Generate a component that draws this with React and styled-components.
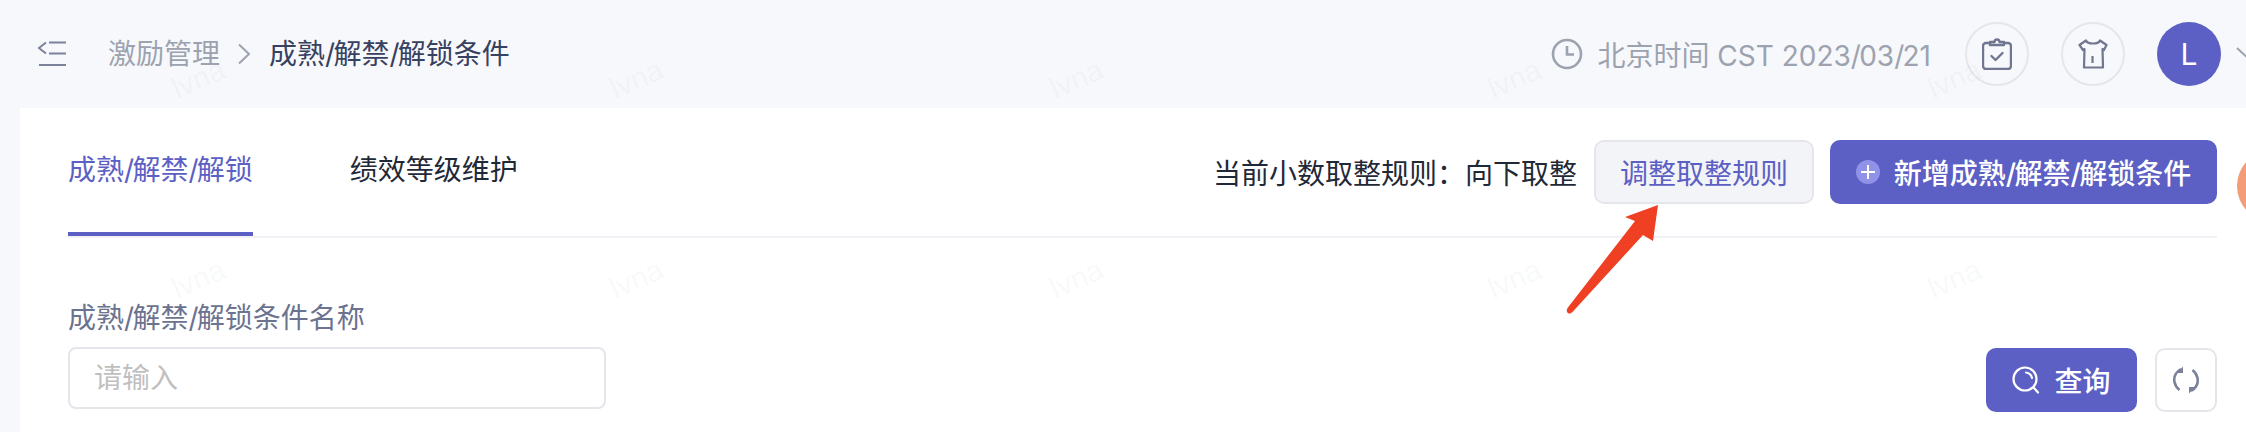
import React from 'react';
import styled, { createGlobalStyle } from 'styled-components';

const PURPLE = '#5c60c4';
const BORDER = '#e5e6ec';
const FONT = 'Inter, "Noto Sans CJK SC", sans-serif';

const GlobalStyle = createGlobalStyle`
  html, body {
    margin: 0;
    padding: 0;
    background: #f7f8fc;
  }
  * {
    box-sizing: border-box;
  }
`;

const Page = styled.div`
  position: relative;
  width: 2246px;
  height: 432px;
  overflow: hidden;
  background: #f7f8fc;
  font-family: ${FONT};
  font-size: 28px;
`;

const Header = styled.header`
  display: flex;
  align-items: center;
  height: 108px;
  padding-left: 37px;
  width: 2279px;
`;

const Breadcrumb = styled.nav`
  display: flex;
  align-items: center;
  margin-left: 41px;
  line-height: 36px;
`;

const Crumb = styled.span`
  color: ${({ $current }) => ($current ? '#374160' : '#9ca3af')};
`;

const HeaderRight = styled.div`
  display: flex;
  align-items: center;
  margin-left: auto;
`;

const TimeBox = styled.div`
  display: flex;
  align-items: center;
  gap: 14px;
  margin-right: 34px;
  color: #9ca3af;
`;

const RoundButton = styled.button`
  display: flex;
  align-items: center;
  justify-content: center;
  width: 64px;
  height: 64px;
  padding: 0;
  margin-right: 32px;
  border: 2px solid ${BORDER};
  border-radius: 50%;
  background: transparent;
`;

const Avatar = styled.div`
  display: flex;
  align-items: center;
  justify-content: center;
  width: 64px;
  height: 64px;
  border-radius: 50%;
  background: ${PURPLE};
  color: #fff;
  font-size: 30px;
`;

const Caret = styled.svg`
  margin-left: 14px;
  margin-right: 14px;
`;

const Card = styled.main`
  height: 324px;
  margin-left: 20px;
  padding: 0 29px 0 48px;
  background: #fff;
`;

const TabBar = styled.div`
  display: flex;
  justify-content: space-between;
  height: 130px;
  border-bottom: 2px solid #f0f0f6;
`;

const Tabs = styled.div`
  display: flex;
  gap: 97px;
`;

const Tab = styled.div`
  height: 128px;
  line-height: 124px;
  border-bottom: 4px solid ${({ $active }) => ($active ? PURPLE : 'transparent')};
  color: ${({ $active }) => ($active ? PURPLE : '#1f2937')};
`;

const Actions = styled.div`
  display: flex;
  align-items: center;
  height: 64px;
  margin-top: 32px;
`;

const RoundingNote = styled.span`
  margin-right: 17px;
  color: #1f2937;
`;

const Button = styled.button`
  display: flex;
  align-items: center;
  justify-content: center;
  height: 64px;
  padding: 0;
  border-radius: 10px;
  font-family: ${FONT};
  font-size: 28px;
`;

const AdjustButton = styled(Button)`
  width: 220px;
  margin-right: 16px;
  border: 2px solid ${BORDER};
  background: #f3f4f7;
  color: ${PURPLE};
`;

const PrimaryButton = styled(Button)`
  width: ${({ $width }) => $width}px;
  gap: ${({ $gap }) => $gap}px;
  border: none;
  background: ${PURPLE};
  color: #fff;
  font-weight: 500;
`;

const RefreshButton = styled(Button)`
  width: 62px;
  border: 2px solid ${BORDER};
  background: #fff;
`;

const FilterRow = styled.div`
  display: flex;
  align-items: flex-end;
  justify-content: space-between;
  padding-top: 62px;
`;

const Field = styled.label`
  display: flex;
  flex-direction: column;
  gap: 11px;
  margin-bottom: 3px;
  line-height: 36px;
  color: #6b7390;
`;

const TextInput = styled.input`
  width: 538px;
  height: 62px;
  padding: 0 24px;
  border: 2px solid ${BORDER};
  border-radius: 8px;
  outline: none;
  font-family: ${FONT};
  font-size: 28px;

  &::placeholder {
    color: #bfbfbf;
  }
`;

const FilterButtons = styled.div`
  display: flex;
  gap: 18px;
`;

const PlusBadge = styled.span`
  display: flex;
  align-items: center;
  justify-content: center;
  width: 24px;
  height: 24px;
  border-radius: 50%;
  background: #8f92e6;
`;

// the slash sits tighter in the reference than in Inter
const Slash = styled.span`
  letter-spacing: -1.7px;
`;

const HelperDot = styled.div`
  position: absolute;
  left: 2237px;
  top: 150px;
  width: 72px;
  height: 72px;
  border-radius: 50%;
  background: #f49b78;
`;

const Arrow = styled.svg`
  position: absolute;
  left: 1560px;
  top: 200px;
`;

const WatermarkLayer = styled.div`
  position: absolute;
  inset: 0;
  pointer-events: none;
`;

const Watermark = styled.span`
  position: absolute;
  left: ${({ $x }) => $x}px;
  top: ${({ $y }) => $y}px;
  transform: rotate(-24deg);
  font-family: "Liberation Sans", sans-serif;
  font-size: 30px;
  line-height: 36px;
  color: rgba(60, 64, 90, 0.05);
`;

const WATERMARK_X = [171, 609, 1049, 1487, 1927];
const WATERMARK_Y = [61, 261];

function SlashText({ children }) {
  return children.split('/').map((part, i) => (
    <React.Fragment key={i}>
      {i > 0 && <Slash>/</Slash>}
      {part}
    </React.Fragment>
  ));
}

function ToggleIcon() {
  return (
    <svg width="30" height="26" viewBox="0 0 30 26" fill="none" stroke="#7b8199" strokeWidth="2">
      <path d="M9 1.5 2 7l7 5.5" />
      <path d="M12 1.500h17M12 12.500h17M2 24h27" />
    </svg>
  );
}

function ChevronIcon() {
  return (
    <svg width="14" height="22" viewBox="0 0 14 22" fill="none" stroke="#9ca3af" strokeWidth="2" style={{ margin: '0 18px 0 17px' }}>
      <path d="M2 1.500l10 9.500L2 20.500" />
    </svg>
  );
}

function ClockIcon() {
  return (
    <svg width="32" height="32" viewBox="0 0 32 32" fill="none" stroke="#9ca3af" strokeWidth="2.600">
      <circle cx="16" cy="16" r="14" />
      <path d="M16 8v8.500h7" />
    </svg>
  );
}

function ClipboardIcon() {
  return (
    <svg width="30" height="32" viewBox="0 0 30 32" fill="none" stroke="#70768f" strokeWidth="2.400" strokeLinejoin="round">
      <path d="M8 5H4a3 3 0 0 0-3 3v20a3 3 0 0 0 3 3h22a3 3 0 0 0 3-3V8a3 3 0 0 0-3-3h-4" />
      <path d="M8 7V4h4.500a2.500 2.500 0 0 1 5 0H22v3z" />
      <path d="M9.500 18l4 4 7-7" strokeLinecap="round" />
    </svg>
  );
}

function ShirtIcon() {
  return (
    <svg width="30" height="30" viewBox="0 0 30 30" fill="none" stroke="#70768f" strokeWidth="2.200" strokeLinejoin="round">
      <path d="M8 1.500C9.500 5.500 20.500 5.500 22 1.500l6.500 4.500-2.500 5-1.500-1 .5 18.500H6l.5-18.500-1.500 1-3.500-5z" />
      <path d="M14.500 17v7" />
    </svg>
  );
}

function SearchIcon() {
  return (
    <svg width="28" height="28" viewBox="0 0 28 28" fill="none" stroke="#fff" strokeWidth="2.200" strokeLinecap="round">
      <circle cx="13" cy="13" r="11.500" />
      <path d="M14 6.500a7 7 0 0 1 6 5.500" />
      <path d="M22 22l4 4.500" />
    </svg>
  );
}

function RefreshIcon() {
  return (
    <svg width="28" height="28" viewBox="0 0 28 28" fill="none" stroke="#7b8199" strokeWidth="2.600">
      <path d="M9 3C4 6 1.500 11 2.500 16c.6 3.200 2.500 6 5 8" />
      <path d="M19 25c5-3 7.500-8 6.500-13-.6-3.200-2.500-6-5-8" />
      <path d="M11 .5v6.500H5z" fill="#7b8199" stroke="none" />
      <path d="M17 27.500V21h6z" fill="#7b8199" stroke="none" />
    </svg>
  );
}

export default function App() {
  return (
    <>
      <GlobalStyle />
      <Page>
        <Header>
          <ToggleIcon />
          <Breadcrumb>
            <Crumb>激励管理</Crumb>
            <ChevronIcon />
            <Crumb $current><SlashText>成熟/解禁/解锁条件</SlashText></Crumb>
          </Breadcrumb>
          <HeaderRight>
            <TimeBox>
              <ClockIcon />
              <span><SlashText>北京时间 CST 2023/03/21</SlashText></span>
            </TimeBox>
            <RoundButton><ClipboardIcon /></RoundButton>
            <RoundButton><ShirtIcon /></RoundButton>
            <Avatar>L</Avatar>
            <Caret width="30" height="16" viewBox="0 0 30 16" fill="none" stroke="#9ca3af" strokeWidth="2">
              <path d="M2 2l13 12L28 2" />
            </Caret>
          </HeaderRight>
        </Header>
        <Card>
          <TabBar>
            <Tabs>
              <Tab $active><SlashText>成熟/解禁/解锁</SlashText></Tab>
              <Tab>绩效等级维护</Tab>
            </Tabs>
            <Actions>
              <RoundingNote>当前小数取整规则：向下取整</RoundingNote>
              <AdjustButton>调整取整规则</AdjustButton>
              <PrimaryButton $width={387} $gap={14}>
                <PlusBadge>
                  <svg width="14" height="14" viewBox="0 0 14 14" stroke="#fff" strokeWidth="2">
                    <path d="M7 0v14M0 7h14" />
                  </svg>
                </PlusBadge>
                <span><SlashText>新增成熟/解禁/解锁条件</SlashText></span>
              </PrimaryButton>
            </Actions>
          </TabBar>
          <FilterRow>
            <Field>
              <span><SlashText>成熟/解禁/解锁条件名称</SlashText></span>
              <TextInput placeholder="请输入" />
            </Field>
            <FilterButtons>
              <PrimaryButton $width={151} $gap={14}>
                <SearchIcon />
                查询
              </PrimaryButton>
              <RefreshButton><RefreshIcon /></RefreshButton>
            </FilterButtons>
          </FilterRow>
        </Card>
        <HelperDot />
        <Arrow width="100" height="120" viewBox="0 0 100 120">
          <path d="M98 5 65 17l10 4L7.500 108c-1.500 3-.5 5 1.500 5.500 1.500.3 2.500-.5 3.500-1.500L83 35l10 6z" fill="#ef4023" />
        </Arrow>
        <WatermarkLayer>
          {WATERMARK_Y.map((y) =>
            WATERMARK_X.map((x) => <Watermark key={`${x}-${y}`} $x={x} $y={y}>lvna</Watermark>)
          )}
        </WatermarkLayer>
      </Page>
    </>
  );
}
